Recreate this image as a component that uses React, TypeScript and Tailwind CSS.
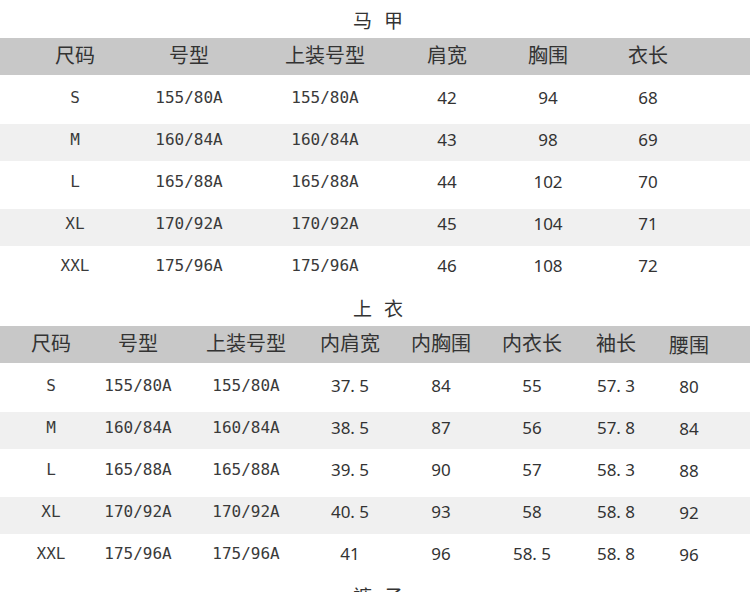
import React from "react";

type Kind = "code" | "num";

const CJK = "font-['Noto_Sans_CJK_SC','Noto_Sans',sans-serif]";
const MONO = "font-['DejaVu_Sans_Mono',monospace] text-[16px] text-[#3a3a3a]";
const NUM = "font-['Noto_Sans','Noto_Sans_CJK_SC',sans-serif] text-[17px]";

const ROWS = [
  "h-[49px] pt-[13px] bg-white",
  "h-[37px] pt-[6px] bg-[#f0f0f0]",
  "h-[48px] pt-[11px] bg-white",
  "h-[37px] pt-[5px] bg-[#f0f0f0]",
  "h-[42px] pt-[10px] bg-white",
];

const vest = {
  title: ["马", "甲"],
  grid: "grid-cols-[150px_78px_194px_50px_152px_48px]",
  heads: ["尺码", "号型", "上装号型", "肩宽", "胸围", "衣长"],
  kinds: ["code", "code", "code", "num", "num", "num"] as Kind[],
  lowLast: false,
  rows: [
    ["S", "155/80A", "155/80A", "42", "94", "68"],
    ["M", "160/84A", "160/84A", "43", "98", "69"],
    ["L", "165/88A", "165/88A", "44", "102", "70"],
    ["XL", "170/92A", "170/92A", "45", "104", "71"],
    ["XXL", "175/96A", "175/96A", "46", "108", "72"],
  ],
};

const top = {
  title: ["上", "衣"],
  grid: "grid-cols-[102px_72px_144px_64px_118px_64px_104px_42px]",
  heads: ["尺码", "号型", "上装号型", "内肩宽", "内胸围", "内衣长", "袖长", "腰围"],
  kinds: ["code", "code", "code", "num", "num", "num", "num", "num"] as Kind[],
  lowLast: true,
  rows: [
    ["S", "155/80A", "155/80A", "37. 5", "84", "55", "57. 3", "80"],
    ["M", "160/84A", "160/84A", "38. 5", "87", "56", "57. 8", "84"],
    ["L", "165/88A", "165/88A", "39. 5", "90", "57", "58. 3", "88"],
    ["XL", "170/92A", "170/92A", "40. 5", "93", "58", "58. 8", "92"],
    ["XXL", "175/96A", "175/96A", "41", "96", "58. 5", "58. 8", "96"],
  ],
};

function Title({ chars }: { chars: string[] }) {
  return (
    <div className={`h-[38px] flex items-center justify-center gap-[12px] pl-[6px] text-[19px] leading-none text-[#333] ${CJK}`}>
      {chars.map((c) => (
        <span key={c}>{c}</span>
      ))}
    </div>
  );
}

function Table({ t }: { t: typeof vest }) {
  const last = t.heads.length - 1;
  return (
    <div>
      <Title chars={t.title} />
      <div className={`grid ${t.grid} h-[37px] items-center pb-[3px] bg-[#c8c8c8] text-[20px] leading-none text-[#333] ${CJK}`}>
        {t.heads.map((h, i) => (
          <div key={h} className={`flex justify-center whitespace-nowrap ${t.lowLast && i === last ? "pt-[4px]" : ""}`}>
            {h}
          </div>
        ))}
      </div>
      {t.rows.map((r, ri) => (
        <div key={ri} className={`grid ${t.grid} items-start text-[#333] ${ROWS[ri]}`}>
          {r.map((v, ci) => (
            <div
              key={ci}
              className={`flex justify-center whitespace-pre leading-[20px] ${
                t.kinds[ci] === "code" ? MONO : NUM
              } ${t.lowLast && ci === last ? "pt-[1px]" : ""}`}
            >
              {v}
            </div>
          ))}
        </div>
      ))}
    </div>
  );
}

export default function App() {
  return (
    <div className="w-[750px] h-[592px] overflow-hidden bg-white">
      <Table t={vest} />
      <Table t={top} />
      <Title chars={["裤", "子"]} />
    </div>
  );
}
